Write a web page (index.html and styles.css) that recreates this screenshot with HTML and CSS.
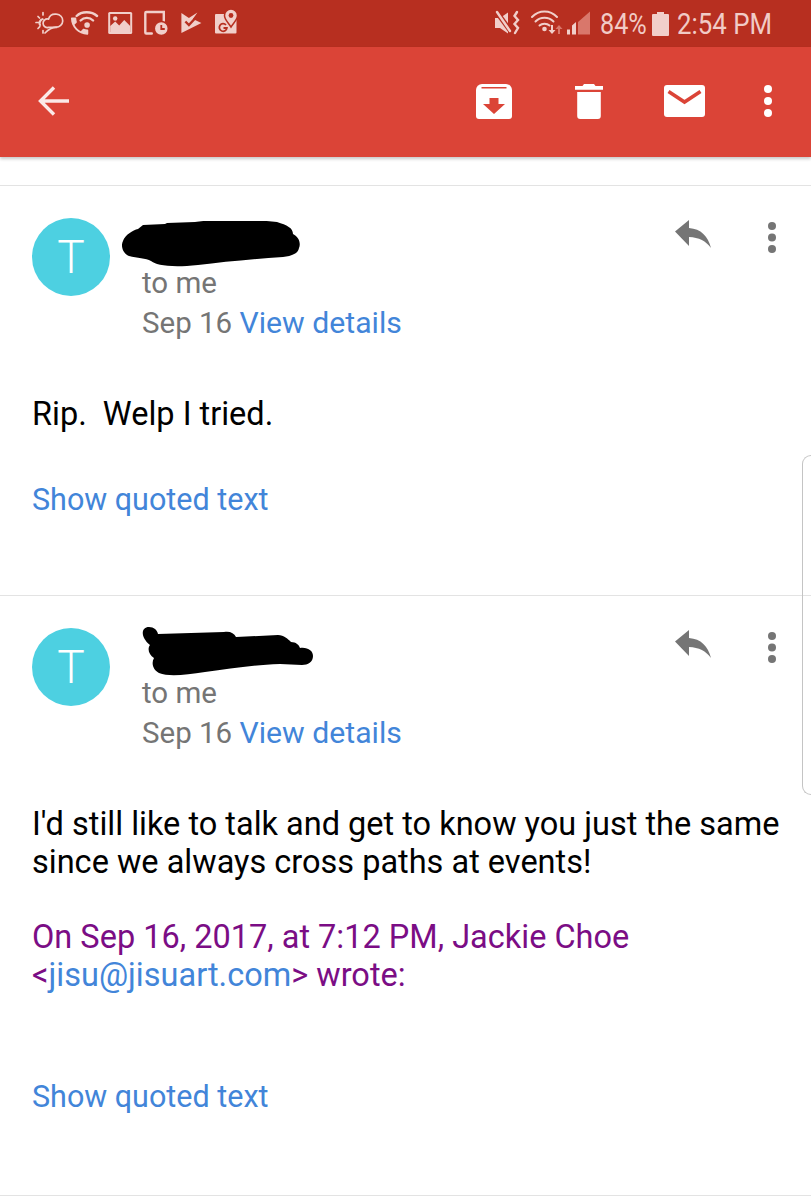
FILE: index.html
```html
<!DOCTYPE html>
<html lang="en">
<head>
<meta charset="utf-8">
<title>Email thread</title>
<link rel="stylesheet" href="styles.css">
</head>
<body>
<header class="status-bar">
  <div class="status-icons">
    <svg class="slot" viewBox="32 0 35.4 47"><g class="st-line"><path d="M45 33c3-3 6-5.500 11-5.800a6.500 6.500 0 0 0 .5-13c-4-.5-7 1.500-8 5"/><path d="M48 19a4.300 4.300 0 1 0 .5 8.400h8"/><path d="M43 12.500v2.500M38 16.500l1.500 1.500M36 22.500h2.500M38 28.500l1.800-1.800M43 30.500v2.500"/></g><path class="st-fill" d="M43 18l1 1.800a3.500 3.500 0 0 0-2.800 5.400l-1.400 1.200A5 5 0 0 1 43 18z"/></svg>
    <svg class="slot" viewBox="67.400 0 35.400 47"><path class="st-fill" transform="translate(68.500 14.500) scale(.96)" d="M6.620 10.790c1.440 2.830 3.760 5.140 6.590 6.590l2.200-2.200c.27-.27.67-.36 1.020-.24 1.120.37 2.330.57 3.570.57.550 0 1 .45 1 1V20c0 .55-.45 1-1 1-9.390 0-17-7.610-17-17 0-.55.45-1 1-1h3.500c.55 0 1 .45 1 1 0 1.250.2 2.450.57 3.570.11.35.03.74-.25 1.020l-2.200 2.200z"/><g class="st-wide"><path d="M77 16c5-5 15-5 20.500 0"/><path d="M81 20.500c3.500-3.500 9-3.500 12.500 0"/></g><circle class="st-fill" cx="87.500" cy="25" r="2.800"/></svg>
    <svg class="slot" viewBox="102.800 0 35.400 47"><rect class="st-fill" x="108" y="12" width="24" height="22" rx="1.500"/><rect class="st-cut" x="110" y="14" width="20" height="18"/><path class="st-fill" d="M110 32v-6l5-4.500 4 4 5-5.500 6 6v6z"/><circle class="st-fill" cx="115" cy="18.500" r="2.200"/></svg>
    <svg class="slot" viewBox="138.200 0 35.400 47"><path class="st-wide" d="M152 33.500h-5.500a1 1 0 0 1-1-1V13a1 1 0 0 1 1-1H164v12"/><circle class="st-ring" cx="161.500" cy="28.500" r="7"/><path class="st-cut-line" d="M161.500 25v4h3.500"/></svg>
    <svg class="slot" viewBox="173.600 0 35.400 47"><path class="st-fill" d="M181 13l7.500 5 8.500-5.500-4.500 6.500 8.500 4-20 10z"/><path class="st-check" d="M185 21.500l3.500 3.500 7-7.500"/></svg>
    <svg class="slot" viewBox="209 0 35.400 47"><rect class="st-fill" x="215" y="14" width="21.500" height="19.500" rx="1"/><path class="st-pin" d="M231 9a6.500 6.500 0 0 1 6.500 6.500c0 4-4 7.500-6.500 11.500-2.500-4-6.500-7.500-6.500-11.500A6.500 6.500 0 0 1 231 9z"/><circle class="st-cut" cx="231" cy="15.500" r="2.400"/><path class="st-cut-line" d="M226 25a3.800 3.800 0 1 0 .9 3h-3.400"/></svg>
  </div>
  <div class="status-right">
    <svg class="st-mute" viewBox="495 0 27 47"><path class="st-fill" d="M495 18h5l8-5.500v21l-8-5.500h-5z"/><path class="st-slash" d="M496 11l16 22"/><path class="st-wide" d="M497 12l13 19"/><path class="st-wide" d="M517 12l-2.500 4 3.500 4-3.500 4 3.500 4-3 5"/></svg>
    <svg class="st-wifi" viewBox="531 0 33 47"><g class="st-thin"><path d="M532 17c7-7.500 18-7.500 25 0"/><path d="M535.500 21.500c5-5 13-5 18 0"/><path d="M539.500 25.500c2.500-2.500 7.500-2.500 10 0"/></g><circle class="st-fill" cx="544.500" cy="29" r="2.300"/><path class="st-arrow" d="M552 25v7"/><path class="st-fill" d="M548.500 30l3.500 4 3.500-4z"/><path class="st-dim-line" d="M559 34v-7"/><path class="st-dim" d="M555.500 29l3.500-4 3.500 4z"/></svg>
    <svg class="st-signal" viewBox="567 0 23 47"><path class="st-dim" d="M578 34.500V22l12-10.500v23z"/><path class="st-fill" d="M567 34.500v-5h3v5zM572 34.500v-9l4-3.500v12.500z"/></svg>
    <div class="st-text st-pct"><span>84%</span></div>
    <svg class="st-batt" viewBox="0 0 17 24"><path class="st-fill" d="M5 0h7v2h4a1 1 0 0 1 1 1v20a1 1 0 0 1-1 1H1a1 1 0 0 1-1-1V3a1 1 0 0 1 1-1h4z"/></svg>
    <div class="st-text st-time"><span>2:54 PM</span></div>
  </div>
</header>

<nav class="toolbar">
  <svg class="tb-back" viewBox="0 0 31 30"><path d="M31 15H3M16 1.500L2.500 15 16 28.500"/></svg>
  <div class="tb-actions">
    <svg class="tb-archive" viewBox="0 0 36 35"><path d="M6 0h24a6 6 0 0 1 6 6v26a3 3 0 0 1-3 3H3a3 3 0 0 1-3-3V6a6 6 0 0 1 6-6z" class="tb-white"/><path class="tb-red" d="M5.500 3h25v1.500h-25zM13.500 14h9v6h6.500L18 30 7 20h6.500z"/></svg>
    <svg class="tb-trash" viewBox="0 0 28 35"><path class="tb-white" d="M9 0h10l1.500 2H28v3.800H0V2h7.500zM2.200 8h23.600v24a3 3 0 0 1-3 3H5.200a3 3 0 0 1-3-3z"/></svg>
    <svg class="tb-mail" viewBox="0 0 41 32"><rect class="tb-white" width="41" height="32" rx="3"/><path class="tb-redline" d="M4.500 6.500l16 10.500 16-10.500"/></svg>
    <svg class="tb-more" viewBox="0 0 8 32"><circle class="tb-white" cx="4" cy="4" r="4"/><circle class="tb-white" cx="4" cy="16" r="4"/><circle class="tb-white" cx="4" cy="28" r="4"/></svg>
  </div>
</nav>

<div class="gap"></div>

<main>
  <article class="message first">
    <div class="head">
      <div class="avatar">T</div>
      <div class="meta">
        <div class="sender"><svg class="blob-a" viewBox="0 0 178 46"><path d="M21 4l22-1 2-1 28-1c20-3 56-3 82 0 10 3 16 6 16 12 6 3 8 9 6 14-1 6-8 8-16 9-30 2-60 5-85 8-28 3-42 0-47-4-5-3-14-3-22-5C2 33-2 26 1 20c2-6 10-11 15-12z"/></svg></div>
        <div class="sub">to me</div>
        <div class="sub">Sep 16 <a class="link">View details</a></div>
      </div>
      <div class="tools">
        <svg class="reply" viewBox="0 0 36 28"><path d="M14 0v8c12 1 19 8 22 20-5-7-12-10.500-22-11v9L0 11.500z"/></svg>
        <svg class="more" viewBox="0 0 8 31"><circle cx="4" cy="4" r="4"/><circle cx="4" cy="15.500" r="4"/><circle cx="4" cy="27" r="4"/></svg>
      </div>
    </div>
    <div class="body">
      <p class="para">Rip.&nbsp; Welp I tried.</p>
      <p class="quoted link">Show quoted text</p>
    </div>
  </article>

  <article class="message second">
    <div class="head">
      <div class="avatar">T</div>
      <div class="meta">
        <div class="sender"><svg class="blob-b" viewBox="0 0 173 50"><path d="M7 0c5 0 8 3 9 7l66-2c6-1 10 1 12 5l42-2c6 0 10 4 13 7 5 0 8 3 9 6 8-1 13 3 13 8 0 6-5 9-11 9l-22-1c-30 1-50 5-75 8-20 3-36 5-46 1-6-3-8-10-5-15-5-3-7-9-4-13C-2 10-1 0 7 0z"/></svg></div>
        <div class="sub">to me</div>
        <div class="sub">Sep 16 <a class="link">View details</a></div>
      </div>
      <div class="tools">
        <svg class="reply" viewBox="0 0 36 28"><path d="M14 0v8c12 1 19 8 22 20-5-7-12-10.500-22-11v9L0 11.500z"/></svg>
        <svg class="more" viewBox="0 0 8 31"><circle cx="4" cy="4" r="4"/><circle cx="4" cy="15.500" r="4"/><circle cx="4" cy="27" r="4"/></svg>
      </div>
    </div>
    <div class="body">
      <p class="para">I'd still like to talk and get to know you just the same<br>since we always cross paths at events!</p>
      <p class="attrib">On Sep 16, 2017, at 7:12 PM, Jackie Choe<br>&lt;<a class="link">jisu@jisuart.com</a>&gt; wrote:</p>
      <p class="quoted-b link">Show quoted text</p>
    </div>
  </article>
</main>

<div class="handle"></div>
</body>
</html>
```

FILE: styles.css
```css
* { box-sizing: border-box; }
html, body { margin: 0; padding: 0; background: #fff; }
body {
  width: 811px;
  height: 1200px;
  overflow: hidden;
  position: relative;
  font-family: Roboto, "Liberation Sans", sans-serif;
  color: #000;
}

/* status bar */
.status-bar {
  height: 47px;
  background: #b72f20;
  display: flex;
  justify-content: space-between;
  color: #f1cbc6;
}
.status-icons { display: flex; padding-left: 32px; }
.slot { width: 35.4px; height: 47px; display: block; }
.st-fill { fill: #f1cfca; }
.st-line, .st-wide, .st-thin { fill: none; stroke: #f1cfca; stroke-linecap: round; }
.st-line { stroke-width: 1.7; }
.st-wide { stroke-width: 2.4; }
.st-thin { stroke-width: 2; }
.st-cut { fill: #b72f20; }
.st-cut-line { fill: none; stroke: #b72f20; stroke-width: 1.8; }
.st-slash { fill: none; stroke: #b72f20; stroke-width: 5; }
.st-ring { fill: #f1cfca; stroke: #b72f20; stroke-width: 1.5; }
.st-pin { fill: #f1cfca; stroke: #b72f20; stroke-width: 1.5; }
.st-check { fill: none; stroke: #b72f20; stroke-width: 2.4; }
.st-arrow { stroke: #f1cfca; stroke-width: 2; fill: none; }
.st-dim { fill: #d9776b; }
.st-dim-line { stroke: #d9776b; stroke-width: 2; fill: none; }

.status-right { display: flex; align-items: center; padding-right: 40px; }
.st-mute { width: 27px; height: 47px; margin-right: 9px; }
.st-wifi { width: 33px; height: 47px; margin-right: 3px; }
.st-signal { width: 23px; height: 47px; margin-right: 10px; }
.st-text { line-height: 47px; white-space: nowrap; font-size: 30px; }
.st-text span { display: inline-block; transform-origin: left center; }
.st-pct { width: 46px; margin-right: 6px; }
.st-pct span { transform: scaleX(.84); }
.st-batt { width: 17px; height: 24px; margin-right: 8px; }
.st-time { width: 94px; }
.st-time span { transform: scaleX(.86); }

/* toolbar */
.toolbar {
  height: 110px;
  background: #db4437;
  display: flex;
  align-items: center;
  justify-content: space-between;
  box-shadow: 0 2px 3px rgba(0, 0, 0, .22);
  position: relative;
  padding: 0 39px 2px 38px;
}
.tb-back { width: 31px; height: 30px; }
.tb-back path { fill: none; stroke: #fbe9e7; stroke-width: 3.4; }
.tb-actions { display: flex; align-items: center; }
.tb-white { fill: #fff; }
.tb-red { fill: #db4437; }
.tb-redline { fill: none; stroke: #db4437; stroke-width: 3.6; }
.tb-archive { width: 36px; height: 35px; margin-right: 63px; }
.tb-trash { width: 28px; height: 35px; margin-right: 61px; }
.tb-mail { width: 41px; height: 32px; margin-right: 59px; }
.tb-more { width: 8px; height: 32px; }

.gap { height: 29px; border-bottom: 1px solid #e3e3e3; }

/* messages */
.message { border-bottom: 1px solid #e3e3e3; padding: 32px 0 0 32px; position: relative; }
.first { height: 410px; }
.second { height: 600px; }
.head { display: flex; align-items: flex-start; position: relative; }
.avatar {
  width: 78px;
  height: 78px;
  flex: none;
  border-radius: 50%;
  background: #4dd0e1;
  color: #fff;
  font-size: 46px;
  font-weight: 300;
  line-height: 78px;
  text-align: center;
}
.meta { margin-left: 32px; flex: 1; }
.sender { height: 45px; position: relative; }
.blob-a { width: 178px; height: 46px; display: block; margin-left: -20px; position: absolute; left: 0; top: 3px; }
.blob-b { width: 173px; height: 50px; display: block; position: absolute; left: 0; top: -1px; }
.blob-a path, .blob-b path { fill: #000; }
.sub { font-size: 29.5px; line-height: 40px; color: #757575; }
.sub .link { font-size: 30.2px; }
.link { color: #4285d9; }
.tools { display: flex; align-items: flex-start; padding: 2px 35.5px 0 0; }
.reply { width: 36px; height: 28px; margin-right: 57px; fill: #757575; }
.more { width: 8px; height: 31px; fill: #757575; margin-top: 2px; }

.body { padding-top: 52px; font-size: 32.5px; line-height: 38px; }
.para { margin: 0; }
.quoted { margin: 48px 0 0; font-size: 30.5px; }
.attrib { margin: 37px 0 0; color: #7b0d85; }
.quoted-b { margin: 84px 0 0; font-size: 30.5px; }

.handle {
  position: absolute;
  right: 0;
  top: 455px;
  width: 9px;
  height: 340px;
  border: 1.5px solid #c4c4c4;
  border-right: 0;
  border-radius: 9px 0 0 9px;
}
```
